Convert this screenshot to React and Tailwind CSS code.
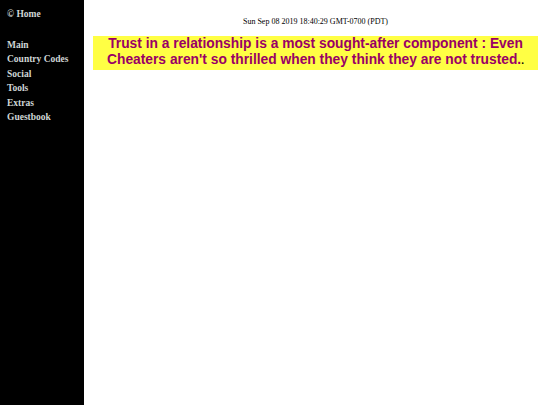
export default function App() {
  const links = ["Main", "Country Codes", "Social", "Tools", "Extras", "Guestbook"]
  return (
    <div className="flex min-h-[405px] w-[540px] bg-white">
      <div className="w-[84px] shrink-0 bg-black px-[7px] pt-[8px] font-['Liberation_Serif',serif] text-[9.5px] font-bold text-[#cfd6d6]">
        <div className="leading-[12px]">© Home</div>
        <div className="mt-[18px] flex flex-col">
          {links.map((l) => (
            <a key={l} className="leading-[14.4px]">{l}</a>
          ))}
        </div>
      </div>
      <div className="flex-1 pl-[9px] pr-[2px]">
        <div className="pt-[17px] text-center font-['Liberation_Serif',serif] text-[8px] leading-[10px] text-black">
          Sun Sep 08 2019 18:40:29 GMT-0700 (PDT)
        </div>
        <div className="mt-[9px] bg-[#ffff44] pb-[1px] text-center font-['Liberation_Sans',Arial,sans-serif] text-[13.8px] font-bold leading-[16px] text-[#990066]">
          Trust in a relationship is a most sought-after component : Even Cheaters aren't so thrilled when they think they are not trusted.<span className="text-[10px] text-black">.</span>
        </div>
      </div>
    </div>
  )
}
